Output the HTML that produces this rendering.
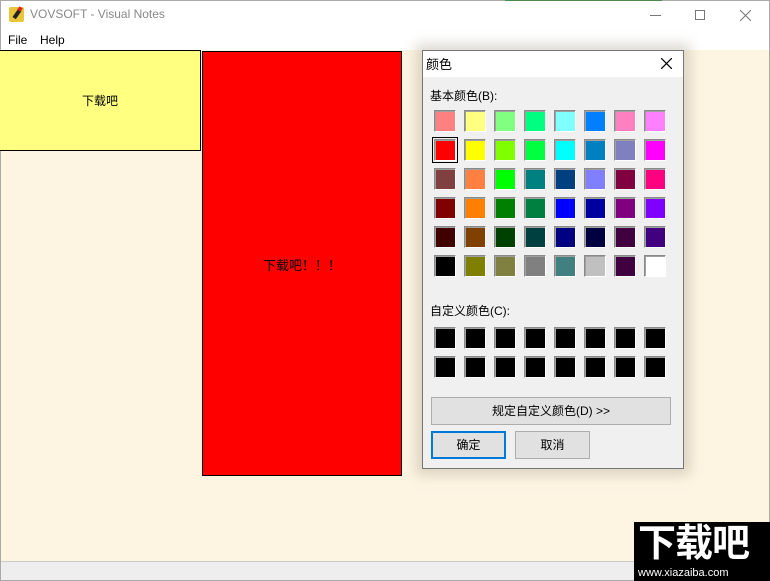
<!DOCTYPE html>
<html><head><meta charset="utf-8"><style>
*{margin:0;padding:0;box-sizing:border-box}
body{width:770px;height:581px;position:relative;overflow:hidden;background:#fdf5e2;font-family:"Segoe UI","Liberation Sans","Noto Sans CJK SC",sans-serif;font-size:12px;color:#000}
.a{position:absolute}
.sw{position:absolute;width:22px;height:22px;border:1px solid;border-color:#8a8a8a #fff #fff #8a8a8a;box-shadow:inset 1px 1px 0 #a0a0a0}
.cn{font-family:"Liberation Sans","Noto Sans CJK SC",sans-serif}
.btn{position:absolute;background:#e1e1e1;border:1px solid #adadad;text-align:center;font-size:12px}
</style></head><body>
<div class="a" style="left:0;top:0;width:770px;height:30px;background:#fff;border-left:1px solid #aaa;border-right:1px solid #aaa;border-top:1px solid #aaa"></div>
<div class="a" style="left:505px;top:0;width:157px;height:1px;background:#4a8a4a"></div>
<div class="a" style="left:9px;top:7px;width:15px;height:15px;background:#e8c53a;border-radius:2px"></div>
<div class="a" style="left:15px;top:9px;width:4px;height:10px;background:#222;transform:rotate(35deg)"></div>
<div class="a" style="left:18px;top:7px;width:4px;height:4px;background:#d22;transform:rotate(35deg)"></div>
<div class="a" style="left:30px;top:7px;font-size:12px;color:#888">VOVSOFT - Visual Notes</div>
<div class="a" style="left:650px;top:15px;width:11px;height:1px;background:#777"></div>
<div class="a" style="left:695px;top:10px;width:10px;height:10px;border:1px solid #777"></div>
<svg class="a" style="left:740px;top:10px" width="11" height="11"><path d="M0 0L11 11M11 0L0 11" stroke="#777" stroke-width="1"/></svg>
<div class="a" style="left:0;top:30px;width:770px;height:20px;background:#fff;border-left:1px solid #aaa;border-right:1px solid #aaa"></div>
<div class="a" style="left:8px;top:33px;font-size:12px">File</div>
<div class="a" style="left:40px;top:33px;font-size:12px">Help</div>
<div class="a" style="left:0;top:50px;width:1px;height:531px;background:#aaa"></div>
<div class="a" style="left:769px;top:50px;width:1px;height:531px;background:#aaa"></div>
<div class="a cn" style="left:0;top:50px;width:201px;height:101px;background:#ffff80;border:1px solid #000;border-left:none;display:flex;align-items:center;justify-content:center;font-size:12px">下载吧</div>
<div class="a cn" style="left:202px;top:51px;width:200px;height:425px;background:#f00;border:1px solid #000;display:flex;align-items:center;justify-content:center;font-size:13px;padding-top:2px">下载吧！！！</div>
<div class="a" style="left:1px;top:561px;width:768px;height:20px;background:#eee;border-top:1px solid #ccc;border-bottom:1px solid #aaa"></div>
<div class="a" style="left:422px;top:50px;width:262px;height:419px;background:#f0f0f0;border:1px solid #777;box-shadow:0 0 12px 6px rgba(180,170,150,.45)"></div>
<div class="a" style="left:423px;top:51px;width:260px;height:26px;background:#fff"></div>
<div class="a cn" style="left:426px;top:54px;font-size:13px">颜色</div>
<svg class="a" style="left:661px;top:58px" width="11" height="11"><path d="M0 0L11 11M11 0L0 11" stroke="#000" stroke-width="1.2"/></svg>
<div class="a cn" style="left:430px;top:87px;font-size:12px">基本颜色(B):</div>
<div class="a cn" style="left:430px;top:302px;font-size:12px">自定义颜色(C):</div>
<div id="g"></div>
<div class="btn cn" style="left:431px;top:397px;width:240px;height:28px;line-height:26px">规定自定义颜色(D) &gt;&gt;</div>
<div class="btn cn" style="left:431px;top:431px;width:75px;height:28px;line-height:24px;border:2px solid #0078d7">确定</div>
<div class="btn cn" style="left:515px;top:431px;width:75px;height:28px;line-height:26px">取消</div>
<div class="a" style="left:634px;top:522px;width:136px;height:59px;background:#000"></div>
<div class="a cn" style="left:638px;top:522px;width:132px;color:#fff;font-size:38px;font-weight:bold;letter-spacing:-1px;line-height:44px">下载吧</div>
<div class="a" style="left:638px;top:566px;color:#fff;font-size:11px;line-height:14px">www.xiazaiba.com</div>
<script>
var c=[["#ff8080","#ffff80","#80ff80","#00ff80","#80ffff","#0080ff","#ff80c0","#ff80ff"],
["#ff0000","#ffff00","#80ff00","#00ff40","#00ffff","#0080c0","#8080c0","#ff00ff"],
["#804040","#ff8040","#00ff00","#008080","#004080","#8080ff","#800040","#ff0080"],
["#800000","#ff8000","#008000","#008040","#0000ff","#0000a0","#800080","#8000ff"],
["#400000","#804000","#004000","#004040","#000080","#000040","#400040","#400080"],
["#000000","#808000","#808040","#808080","#408080","#c0c0c0","#400040","#ffffff"]];
var h="";
for(var r=0;r<6;r++)for(var i=0;i<8;i++){h+='<div class="sw" style="left:'+(434+30*i)+'px;top:'+(110+29*r)+'px;background:'+c[r][i]+'"></div>';}
for(var r=0;r<2;r++)for(var i=0;i<8;i++){h+='<div class="sw" style="left:'+(434+30*i)+'px;top:'+(327+29*r)+'px;background:#000"></div>';}
h+='<div class="a" style="left:432px;top:137px;width:26px;height:26px;border:1px solid #000"></div>';
document.getElementById("g").innerHTML=h;
</script>
</body></html>
